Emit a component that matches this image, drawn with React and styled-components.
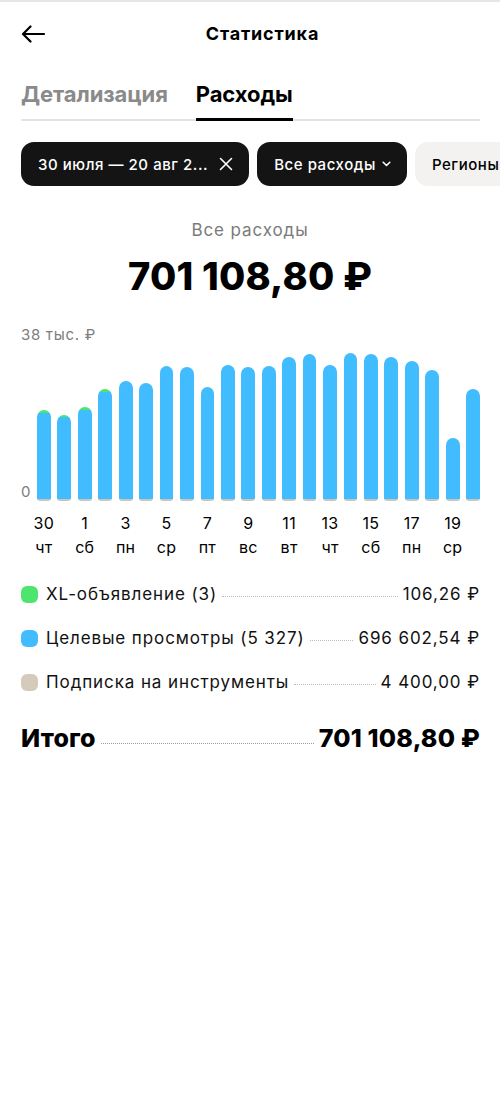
import styled, { createGlobalStyle } from 'styled-components'

const GlobalStyle = createGlobalStyle`
  body {
    margin: 0;
    background: #fff;
    font-family: Inter, "Noto Sans", "Liberation Sans", sans-serif;
    color: #000;
  }
`

const bars = [
  { h: 91, xl: 3 }, { h: 86, xl: 2 }, { h: 94, xl: 3 }, { h: 112, xl: 3 },
  { h: 120 }, { h: 118 }, { h: 135 }, { h: 134 }, { h: 114 }, { h: 136 },
  { h: 134 }, { h: 135 }, { h: 144 }, { h: 147 }, { h: 136 }, { h: 148 },
  { h: 147 }, { h: 144 }, { h: 140 }, { h: 131 }, { h: 63 }, { h: 112 },
]

const days = [
  ['30', 'чт'], ['1', 'сб'], ['3', 'пн'], ['5', 'ср'], ['7', 'пт'], ['9', 'вс'],
  ['11', 'вт'], ['13', 'чт'], ['15', 'сб'], ['17', 'пн'], ['19', 'ср'],
]

const legend = [
  { color: '#4de56f', label: 'XL-объявление (3)', amount: '106,26 ₽' },
  { color: '#40bcff', label: 'Целевые просмотры (5 327)', amount: '696 602,54 ₽' },
  { color: '#d4cbbb', label: 'Подписка на инструменты', amount: '4 400,00 ₽' },
]

function ArrowBack() {
  return (
    <svg width="24" height="18" viewBox="0 0 24 18" fill="none">
      <path d="M23 9H2.5M9.5 1.5L2 9l7.5 7.5" stroke="#000" strokeWidth="2.2" strokeLinecap="round" strokeLinejoin="round"/>
    </svg>
  )
}

function Cross() {
  return (
    <svg width="14" height="14" viewBox="0 0 14 14" fill="none">
      <path d="M1.5 1.5l11 11M12.5 1.5l-11 11" stroke="#fff" strokeWidth="1.6" strokeLinecap="round"/>
    </svg>
  )
}

function Chevron() {
  return (
    <svg width="9" height="6" viewBox="0 0 9 6" fill="none">
      <path d="M1.2 1.3L4.5 4.5l3.3-3.2" stroke="#fff" strokeWidth="1.6" strokeLinecap="round" strokeLinejoin="round"/>
    </svg>
  )
}

export default function App() {
  return (
    <Page>
      <GlobalStyle />
      <Header>
        <BackButton><ArrowBack /></BackButton>
        <Title>Статистика</Title>
      </Header>

      <Tabs>
        <Tab>Детализация</Tab>
        <Tab $active>Расходы</Tab>
      </Tabs>

      <Chips>
        <Chip $dark $gap={11}>30 июля — 20 авг 2... <Cross /></Chip>
        <Chip $dark $gap={6}>Все расходы <Chevron /></Chip>
        <Chip>Регионы</Chip>
      </Chips>

      <Summary>
        <SummaryLabel>Все расходы</SummaryLabel>
        <SummaryValue>701 108,80 ₽</SummaryValue>
      </Summary>

      <Chart>
        <AxisTop>38 тыс. ₽</AxisTop>
        <Plot>
          <AxisZero>0</AxisZero>
          <Bars>
            {bars.map((b, i) => (
              <Bar key={i} style={{ height: b.h }}>
                {b.xl && <Segment $color="#4de56f" style={{ height: b.xl }} />}
                <Segment $color="#40bcff" $grow />
                <Segment $color="#c9c6c0" style={{ height: 2 }} />
              </Bar>
            ))}
          </Bars>
        </Plot>
        <DayRow>
          {bars.map((_, i) => (
            <DayCell key={i}>
              {i % 2 === 0 && (
                <Day>
                  <span>{days[i / 2][0]}</span>
                  <span>{days[i / 2][1]}</span>
                </Day>
              )}
            </DayCell>
          ))}
        </DayRow>
      </Chart>

      <Legend>
        {legend.map((l) => (
          <LegendRow key={l.label}>
            <Dot $color={l.color} />
            <span>{l.label}</span>
            <Leader />
            <span>{l.amount}</span>
          </LegendRow>
        ))}
      </Legend>

      <TotalRow>
        <span>Итого</span>
        <Leader $total />
        <span>701 108,80 ₽</span>
      </TotalRow>
    </Page>
  )
}

const Page = styled.div`
  width: 500px;
  min-height: 1117px;
  box-sizing: border-box;
  border-top: 2px solid #e6e6e6;
  overflow: hidden;
`

const Header = styled.div`
  height: 62px;
  display: flex;
  align-items: center;
  padding: 0 21px;
`

const BackButton = styled.div`
  display: flex;
  align-items: center;
  width: 24px;
  height: 24px;
  margin-top: 1px;
`

const Title = styled.div`
  flex: 1;
  text-align: center;
  font-size: 18px;
  font-weight: 700;
  letter-spacing: 0.8px;
  padding-left: 1px;
`

const Tabs = styled.div`
  display: flex;
  gap: 28px;
  margin: 0 20px 0 21px;
  border-bottom: 2px solid #e2e2e2;
`

const Tab = styled.div`
  font-size: 22px;
  font-weight: 700;
  line-height: 28px;
  padding: 16px 0 13px;
  color: ${(p) => (p.$active ? '#000' : '#8a8a8a')};
  box-shadow: ${(p) => (p.$active ? 'inset 0 -3px 0 #000' : 'none')};
  margin-bottom: -2px;
  letter-spacing: -0.1px;
`

const Chips = styled.div`
  display: flex;
  gap: 8px;
  margin-top: 21px;
  padding-left: 21px;
  white-space: nowrap;
`

const Chip = styled.div`
  flex-shrink: 0;
  height: 44px;
  box-sizing: border-box;
  display: flex;
  align-items: center;
  gap: ${(p) => p.$gap || 0}px;
  padding: 0 16px 0 17px;
  border-radius: 13px;
  font-size: 15px;
  font-weight: 500;
  letter-spacing: 0.55px;
  background: ${(p) => (p.$dark ? '#141414' : '#f3f2f1')};
  color: ${(p) => (p.$dark ? '#fff' : '#000')};
`

const Summary = styled.div`
  margin-top: 33px;
  text-align: center;
`

const SummaryLabel = styled.div`
  font-size: 17px;
  line-height: 22px;
  letter-spacing: 0.9px;
  color: #7a7a7a;
`

const SummaryValue = styled.div`
  margin-top: 12px;
  font-size: 38px;
  line-height: 46px;
  font-weight: 800;
  letter-spacing: 0.2px;
`

const Chart = styled.div`
  margin-top: 27px;
  padding: 0 20px 0 21px;
`

const AxisTop = styled.div`
  font-size: 15px;
  line-height: 18px;
  letter-spacing: 0.7px;
  color: #7d7d7d;
`

const Plot = styled.div`
  display: flex;
  align-items: flex-end;
  height: 157px;
`

const AxisZero = styled.div`
  width: 16px;
  font-size: 15px;
  line-height: 18px;
  color: #7d7d7d;
`

const Bars = styled.div`
  flex: 1;
  height: 100%;
  display: grid;
  grid-template-columns: repeat(22, 1fr);
  column-gap: 6.7px;
  align-items: end;
`

const Bar = styled.div`
  display: flex;
  flex-direction: column;
  border-radius: 7px 7px 3px 3px;
  overflow: hidden;
`

const Segment = styled.div`
  background: ${(p) => p.$color};
  flex: ${(p) => (p.$grow ? 1 : 'none')};
`

const DayRow = styled.div`
  display: grid;
  grid-template-columns: repeat(22, 1fr);
  column-gap: 6.7px;
  margin-left: 16px;
  margin-top: 12px;
`

const DayCell = styled.div`
  display: flex;
  justify-content: center;
  min-width: 0;
`

const Day = styled.div`
  display: flex;
  flex-direction: column;
  align-items: center;
  gap: 4px;
  font-size: 16px;
  line-height: 20px;
  letter-spacing: 0.3px;
  white-space: nowrap;
`

const Legend = styled.div`
  margin-top: 25px;
  padding: 0 20px 0 21px;
  display: flex;
  flex-direction: column;
  gap: 20px;
`

const LegendRow = styled.div`
  display: flex;
  align-items: baseline;
  font-size: 17px;
  line-height: 24px;
  letter-spacing: 0.9px;
  color: #111;
`

const Dot = styled.div`
  width: 17px;
  height: 17px;
  border-radius: 6px;
  background: ${(p) => p.$color};
  margin-right: 8px;
  align-self: center;
`

const Leader = styled.div`
  flex: 1;
  margin: 0 5px;
  border-bottom: 1px dotted ${(p) => (p.$total ? '#9c9c9c' : '#bdbdbd')};
  transform: translateY(-3px);
`

const TotalRow = styled.div`
  display: flex;
  align-items: baseline;
  margin-top: 29px;
  padding: 0 20px 0 21px;
  font-size: 25px;
  line-height: 30px;
  font-weight: 800;
  letter-spacing: 0.2px;
`
